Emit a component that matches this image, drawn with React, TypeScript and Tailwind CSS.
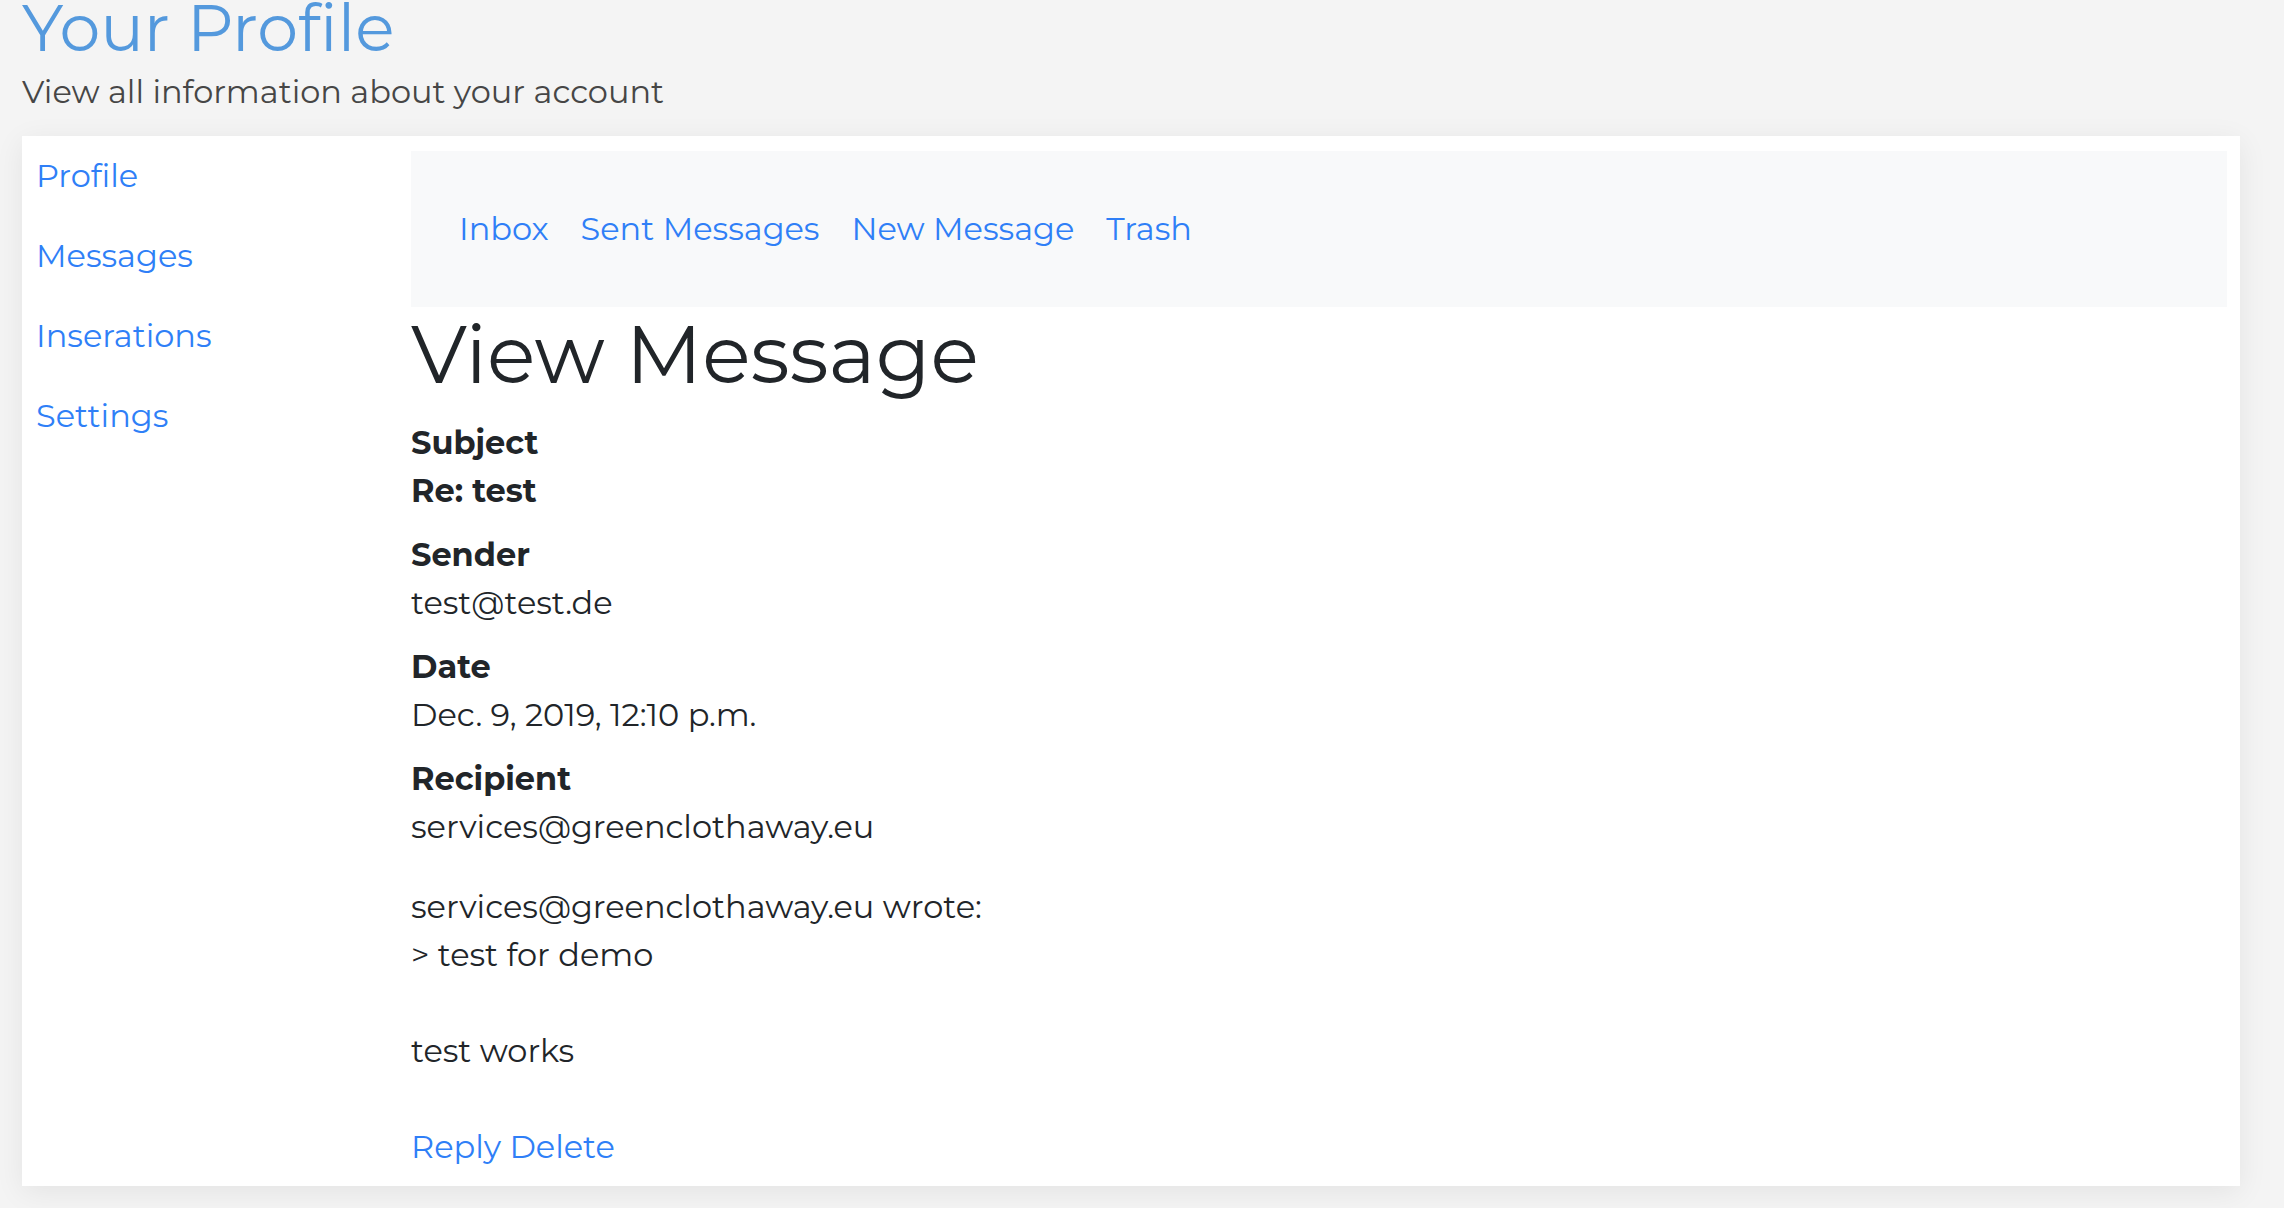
const sideLinks = ['Profile', 'Messages', 'Inserations', 'Settings']
const tabLinks = ['Inbox', 'Sent Messages', 'New Message', 'Trash']

type Field = {
  label: string
  value: string
  strong?: boolean
}

const fields: Field[] = [
  { label: 'Subject', value: 'Re: test', strong: true },
  { label: 'Sender', value: 'test@test.de' },
  { label: 'Date', value: 'Dec. 9, 2019, 12:10 p.m.' },
  { label: 'Recipient', value: 'services@greenclothaway.eu' },
]

const body = 'services@greenclothaway.eu wrote:\n> test for demo\n\ntest works'

export default function App() {
  return (
    <div className="min-h-screen overflow-hidden bg-[#f4f4f4] font-['Montserrat','Inter',sans-serif] text-[32px] leading-[48px] text-[#212529]">
      <header className="px-[22px]">
        <h2 className="-mt-[10px] text-[65px] leading-[76px] font-normal text-[#5499dd]">Your Profile</h2>
        <p className="mt-[2px] text-[32px] leading-[48px] text-[#464646]">View all information about your account</p>
      </header>

      <div className="mt-[20px] mr-[44px] ml-[22px] flex bg-white shadow-[0_6px_28px_rgba(0,0,0,0.07)]">
        <nav className="flex w-[389px] shrink-0 flex-col pl-[14px]">
          {sideLinks.map((link) => (
            <a key={link} href="#" className="py-4 text-[#2f7ff7]">
              {link}
            </a>
          ))}
        </nav>

        <main className="flex-1 pt-[15px] pr-[13px] pb-[15px]">
          <div className="flex h-[156px] items-center gap-[32px] bg-[#f8f9fa] pl-[48px]">
            {tabLinks.map((link) => (
              <a key={link} href="#" className="text-[#2f7ff7]">
                {link}
              </a>
            ))}
          </div>

          <h1 className="mb-4 text-[80px] leading-[1.2] font-normal">View Message</h1>

          {fields.map((field) => (
            <div key={field.label} className="mb-4">
              <p className="font-bold">{field.label}</p>
              <p className={field.strong ? 'font-bold' : ''}>{field.value}</p>
            </div>
          ))}

          <p className="mt-8 whitespace-pre-line">{body}</p>

          <div className="mt-12">
            <a href="#" className="text-[#2f7ff7]">Reply</a>{' '}
            <a href="#" className="text-[#2f7ff7]">Delete</a>
          </div>
        </main>
      </div>
    </div>
  )
}
